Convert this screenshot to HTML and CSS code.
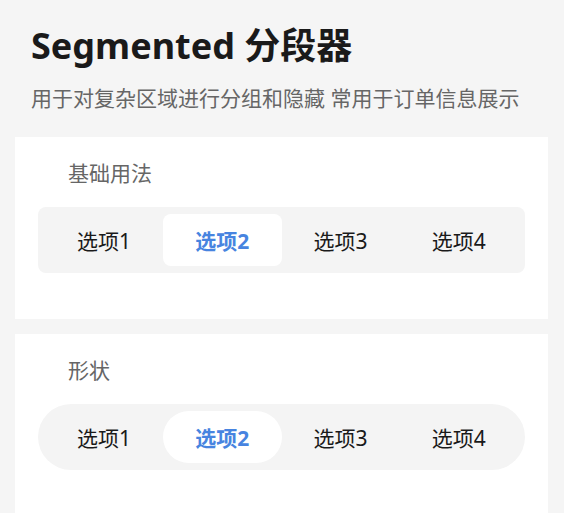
FILE: index.html
```html
<!DOCTYPE html>
<html lang="zh-CN">
<head>
<meta charset="utf-8">
<title>Segmented 分段器</title>
<link rel="stylesheet" href="styles.css">
</head>
<body>
<header class="header">
  <h1 class="title">Segmented 分段器</h1>
  <p class="desc">用于对复杂区域进行分组和隐藏 常用于订单信息展示</p>
</header>
<section class="card">
  <h2 class="card-title">基础用法</h2>
  <div class="segmented">
    <div class="seg-item">选项1</div>
    <div class="seg-item active">选项2</div>
    <div class="seg-item">选项3</div>
    <div class="seg-item">选项4</div>
  </div>
</section>
<section class="card">
  <h2 class="card-title">形状</h2>
  <div class="segmented round">
    <div class="seg-item">选项1</div>
    <div class="seg-item active">选项2</div>
    <div class="seg-item">选项3</div>
    <div class="seg-item">选项4</div>
  </div>
</section>
</body>
</html>
```
FILE: styles.css
```css
html, body {
  margin: 0;
  padding: 0;
  background: #f5f5f5;
}
body {
  font-family: "Noto Sans", "Noto Sans CJK SC", sans-serif;
  color: #1a1a1a;
}
.header {
  padding: 21px 20px 0 31px;
  height: 116px;
  box-sizing: border-box;
}
.title {
  margin: 0;
  font-size: 36px;
  line-height: 50px;
  font-weight: 700;
  color: #1a1a1a;
}
.desc {
  margin: 13px 0 0;
  font-size: 21px;
  line-height: 28px;
  color: #666;
  white-space: nowrap;
}
.card {
  background: #fff;
  margin: 21px 16px 15px 15px;
  padding: 22px 23px 46px;
}
.card + .card {
  margin-top: 15px;
}
.card-title {
  margin: 0 0 20px 30px;
  font-size: 21px;
  line-height: 28px;
  font-weight: 400;
  color: #666;
}
.segmented {
  display: grid;
  grid-template-columns: repeat(4, 1fr);
  padding: 7px;
  background: #f4f4f4;
  border-radius: 8px;
  height: 66px;
  box-sizing: border-box;
}
.seg-item {
  display: flex;
  align-items: center;
  justify-content: center;
  font-size: 21px;
  color: #1a1a1a;
  border-radius: 8px;
}
.seg-item.active {
  background: #fff;
  color: #4784e0;
  font-weight: 700;
}
.segmented.round,
.segmented.round .seg-item {
  border-radius: 999px;
}
```
